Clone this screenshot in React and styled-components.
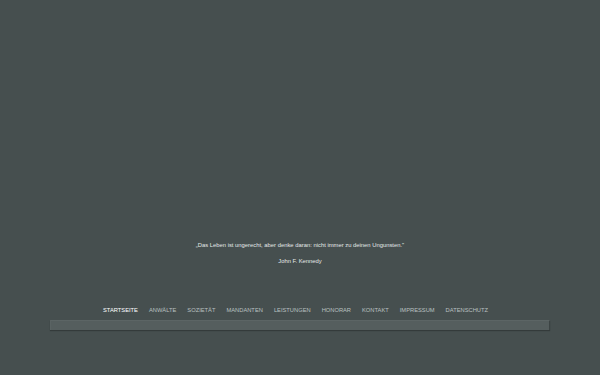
import React from "react";
import styled, { createGlobalStyle } from "styled-components";

const GlobalStyle = createGlobalStyle`
  html, body {
    margin: 0;
    padding: 0;
    background: #464f4f;
  }
  body {
    font-family: "Liberation Sans", Arial, sans-serif;
  }
`;

const Page = styled.div`
  width: 500px;
  height: 375px;
  margin: 0 auto;
  display: flex;
  flex-direction: column;
`;

const Stage = styled.div`
  flex: 1;
  display: flex;
  flex-direction: column;
  justify-content: flex-end;
  align-items: center;
  padding-bottom: 40px;
`;

const Quote = styled.p`
  margin: 0;
  color: #e4e8e8;
  font-size: 5.85px;
  line-height: 8px;
  text-align: center;
`;

const Author = styled(Quote)`
  margin-top: 8px;
`;

const Nav = styled.nav`
  display: flex;
  justify-content: center;
  gap: 11px;
  padding-right: 9px;
  height: 10px;
  align-items: center;
  margin-bottom: 5px;
`;

const NavLink = styled.a`
  font-size: 5.75px;
  text-transform: uppercase;
  text-decoration: none;
  color: ${(props) => (props.$active ? "#ffffff" : "#b9c0c0")};
`;

const Bar = styled.div`
  height: 10px;
  box-sizing: border-box;
  background: #555e5e;
  border-top: 1px solid #5c6565;
  border-left: 1px solid #5a6363;
  border-right: 1px solid #3c4444;
  box-shadow: 0 1px 1px rgba(0, 0, 0, 0.25);
  margin-bottom: 45px;
`;

const links = [
  "Startseite",
  "Anwälte",
  "Sozietät",
  "Mandanten",
  "Leistungen",
  "Honorar",
  "Kontakt",
  "Impressum",
  "Datenschutz",
];

export default function App() {
  return (
    <>
      <GlobalStyle />
      <Page>
        <Stage>
          <Quote>
            „Das Leben ist ungerecht, aber denke daran: nicht immer zu deinen
            Ungunsten."
          </Quote>
          <Author>John F. Kennedy</Author>
        </Stage>
        <Nav>
          {links.map((l, i) => (
            <NavLink key={l} href="#" $active={i === 0}>
              {l}
            </NavLink>
          ))}
        </Nav>
        <Bar />
      </Page>
    </>
  );
}
